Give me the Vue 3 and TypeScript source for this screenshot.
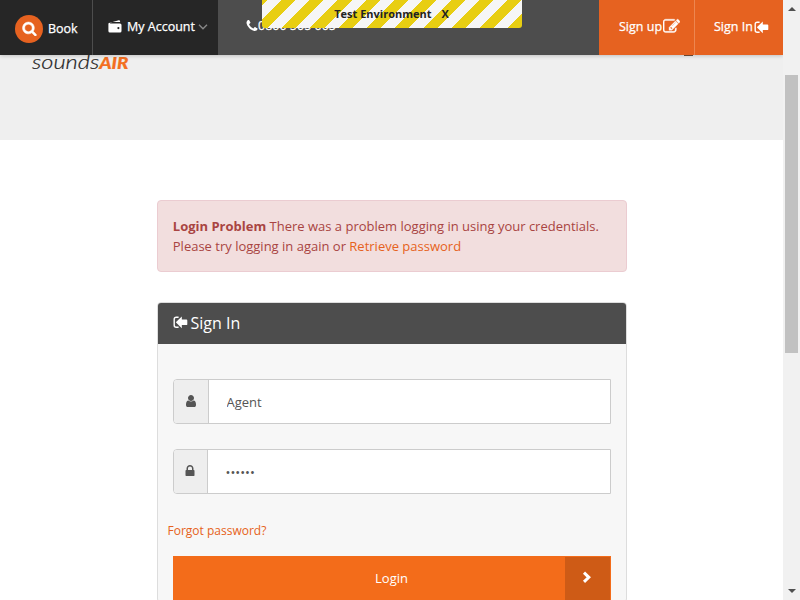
<script setup lang="ts">
import { ref } from 'vue'

const username = ref('Agent')
const password = ref('••••••')
const showEnvironment = ref(true)
</script>

<template>
  <div class="window">
    <main class="page">
      <header class="topbar">
        <a class="book">
          <span class="book-icon">
            <svg viewBox="0 0 1792 1792"><path d="M1216 832q0-185-131.5-316.5t-316.5-131.5-316.5 131.5-131.5 316.5 131.5 316.5 316.5 131.5 316.5-131.5 131.5-316.5zm512 832q0 52-38 90t-90 38q-54 0-90-38l-343-342q-179 124-399 124-143 0-273.5-55.5t-225-150-150-225-55.5-273.5 55.5-273.5 150-225 225-150 273.5-55.5 273.5 55.5 225 150 150 225 55.5 273.5q0 220-124 399l343 343q37 37 37 90z" /></svg>
          </span>
          <span>Book</span>
        </a>
        <a class="account">
          <svg class="wallet" viewBox="0 0 14 13"><path d="M1 3 10.8.2q.9-.2 1.1.6l.3 1.2H3.5L1.8 3.4H12q1.5 0 1.5 1.5V11q0 1.5-1.5 1.5H2Q.4 12.5.4 11V4Q.4 3.2 1 3zm9.4 4a1.1 1.1 0 1 0 0 2.2 1.1 1.1 0 0 0 0-2.2z" /></svg>
          <span>My Account</span>
          <svg class="chevron" viewBox="0 0 10 6"><path d="m1 .8 4 4 4-4" /></svg>
        </a>
        <div class="phone">
          <svg viewBox="0 0 1792 1792"><path d="M1600 1240q0 27-10 70.5t-21 68.5q-21 50-122 106-94 51-186 51-27 0-53-3.5t-57.5-12.5-47-14.5-55.5-20.5-49-18q-98-35-175-83-127-79-264-216t-216-264q-48-77-83-175-3-9-18-49t-20.5-55.5-14.5-47-12.5-57.5-3.5-53q0-92 51-186 56-101 106-122 25-11 68.5-21t70.5-10q14 0 21 3 18 6 53 76 11 19 30 54t35 63.5 31 53.5q3 4 17.5 25t21.5 35.5 7 28.5q0 20-28.5 50t-62 55-62 53-28.5 46q0 9 5 22.5t8.5 20.5 14 24 11.5 19q76 137 174 235t235 174q2 1 19 11.5t24 14 20.5 8.5 22.5 5q18 0 46-28.5t53-62 55-62 50-28.5q14 0 28.5 7t35.5 21.5 25 17.5q25 15 53.5 31t63.5 35 54 30q70 35 76 53 3 7 3 21z" /></svg>
          <span>0800 505 005</span>
        </div>
        <a class="signup">
          <span>Sign up</span>
          <svg viewBox="0 0 1792 1792"><path d="M888 1184l116-116-152-152-116 116v56h96v96h56zm440-720q-16-16-33 1l-350 350q-17 17-1 33t33-1l350-350q17-17 1-33zm80 594v190q0 119-84.5 203.5t-203.5 84.5h-832q-119 0-203.5-84.5t-84.5-203.5v-832q0-119 84.5-203.5t203.5-84.5h832q63 0 117 25 15 7 18 23 3 17-9 29l-49 49q-14 14-32 8-23-6-45-6h-832q-66 0-113 47t-47 113v832q0 66 47 113t113 47h832q66 0 113-47t47-113v-126q0-13 9-22l64-64q15-15 35-7t20 29zm-96-738l288 288-672 672h-288v-288zm444 132l-92 92-288-288 92-92q28-28 68-28t68 28l152 152q28 28 28 68t-28 68z" /></svg>
        </a>
        <a class="signin">
          <span>Sign In</span>
          <svg class="enter" viewBox="0 0 15 13"><path class="bracket" d="M5.6 1.3H3.2Q1.2 1.3 1.2 3.3v5.9q0 2 2 2H5.6" /><path d="m2.8 6.3 6-5.9v3.1h4.6q.9 0 .9.9v3.8q0 .9-.9.9H8.8v3.1z" /></svg>
        </a>
        <div v-if="showEnvironment" class="environment">
          <span>Test Environment</span>
          <span class="close" @click="showEnvironment = false">X</span>
        </div>
      </header>

      <section class="brand">
        <div class="logo">sounds<b>AIR</b></div>
        <span class="menu-tip"></span>
      </section>

      <section class="content">
        <div class="alert">
          <div><strong>Login Problem</strong> There was a problem logging in using your credentials.</div>
          <div>Please try logging in again or <a>Retrieve password</a></div>
        </div>
        <form class="panel" @submit.prevent>
          <h1>
            <svg class="enter" viewBox="0 0 15 13"><path class="bracket" d="M5.6 1.3H3.2Q1.2 1.3 1.2 3.3v5.9q0 2 2 2H5.6" /><path d="m2.8 6.3 6-5.9v3.1h4.6q.9 0 .9.9v3.8q0 .9-.9.9H8.8v3.1z" /></svg>
            <span>Sign In</span>
          </h1>
          <div class="fields">
            <label class="field">
              <span class="addon user">
                <svg viewBox="0 0 1792 1792"><path d="M1536 1399q0 109-62.5 187t-150.5 78h-854q-88 0-150.5-78t-62.5-187q0-85 8.5-160.5t31.5-152 58.5-131 94-89 134.5-34.5q131 128 313 128t313-128q76 0 134.5 34.5t94 89 58.5 131 31.5 152 8.5 160.5zm-256-887q0 159-112.5 271.5t-271.5 112.5-271.5-112.5-112.5-271.5 112.5-271.5 271.5-112.5 271.5 112.5 112.5 271.5z" /></svg>
              </span>
              <input v-model="username" type="text">
            </label>
            <label class="field">
              <span class="addon lock">
                <svg viewBox="0 0 1792 1792"><path d="M640 768h512v-192q0-106-75-181t-181-75-181 75-75 181v192zm832 96v576q0 40-28 68t-68 28h-960q-40 0-68-28t-28-68v-576q0-40 28-68t68-28h32v-192q0-184 132-316t316-132 316 132 132 316v192h32q40 0 68 28t28 68z" /></svg>
              </span>
              <input v-model="password" class="secret" type="text">
            </label>
          </div>
          <a class="forgot">Forgot password?</a>
          <button class="login" type="submit">
            <span class="login-text">Login</span>
            <span class="login-arrow"><svg viewBox="0 0 10 13"><path d="m2 1.7 4.8 4.6L2 10.9" /></svg></span>
          </button>
        </form>
      </section>
    </main>
    <aside class="scrollbar">
      <span class="arrow up"></span>
      <span class="thumb"></span>
      <span class="arrow down"></span>
    </aside>
  </div>
</template>

<style>
body {
  overflow: hidden;
}
</style>

<style scoped>
* {
  box-sizing: border-box;
}
.window {
  display: flex;
  width: 800px;
  height: 600px;
  overflow: hidden;
  background: #fff;
  font: 13px/20px "Open Sans", sans-serif;
}
.page {
  width: 783px;
  height: 600px;
  overflow: hidden;
}
svg {
  display: block;
  flex: none;
  fill: currentColor;
}
.topbar {
  position: relative;
  z-index: 1;
  display: flex;
  height: 55px;
  background: #4d4d4d;
  color: #fff;
  font-size: 12.5px;
  -webkit-text-stroke: 0.25px currentColor;
  box-shadow: 0 1px 4px rgba(0, 0, 0, 0.2);
}
.book {
  display: flex;
  align-items: center;
  gap: 5px;
  width: 93px;
  padding: 3px 0 0 15px;
  background: #262626;
  border-right: 1px solid #4d4d4d;
}
.book-icon {
  display: flex;
  align-items: center;
  justify-content: center;
  width: 28px;
  height: 28px;
  padding: 0 0 1px;
  border-radius: 50%;
  background: #e66220;
}
.book-icon svg {
  width: 15px;
  height: 15px;
  stroke: currentColor;
  stroke-width: 60;
}
.account {
  display: flex;
  align-items: center;
  width: 125px;
  padding: 0 0 1px 15px;
  background: #262626;
}
.wallet {
  width: 14px;
  height: 13px;
  margin: 0 5px 1px 0;
}
.chevron {
  width: 10px;
  height: 6px;
  margin: 0 0 0 3px;
  fill: none;
  stroke: #888;
  stroke-width: 1.4;
}
.phone {
  display: flex;
  align-items: center;
  flex: 1;
  padding: 0 0 3px 27px;
}
.phone svg {
  width: 14px;
  height: 14px;
  margin-right: -1px;
}
.signup,
.signin {
  display: flex;
  align-items: center;
  background: #e66220;
  padding-bottom: 1px;
}
.signup {
  width: 96px;
  padding-left: 20px;
  gap: 1px;
  border-right: 1px solid #ed8650;
}
.signup svg {
  width: 17px;
  height: 17px;
  margin-bottom: 1px;
  stroke: currentColor;
  stroke-width: 40;
}
.signin {
  width: 88px;
  padding-left: 19px;
  gap: 1px;
}
.enter {
  width: 15px;
  height: 13px;
}
.bracket {
  fill: none;
  stroke: currentColor;
  stroke-width: 1.4;
}
.environment {
  position: absolute;
  top: 0;
  left: 262px;
  display: flex;
  justify-content: center;
  gap: 10px;
  width: 260px;
  height: 28px;
  padding: 4px 1px 0 0;
  border-radius: 0 0 3px 3px;
  background: repeating-linear-gradient(-45deg, #e8ce12 0 10px, #f6f6f6 10px 20px);
  color: #222;
  font-size: 11px;
  font-weight: 700;
  -webkit-text-stroke: 0;
}
.brand {
  display: flex;
  justify-content: space-between;
  height: 85px;
  background: #efefef;
}
.logo {
  margin: -6px 0 0 32px;
  color: #222;
  font: italic 300 20px/24px Lato, sans-serif;
  -webkit-text-stroke: 0.2px currentColor;
  transform: scaleX(1.18);
  transform-origin: left;
}
.logo b {
  color: #f36f21;
  font-size: 16px;
  font-weight: 900;
}
.menu-tip {
  width: 9px;
  height: 1px;
  margin-right: 90px;
  background: #76513c;
}
.content {
  display: flex;
  flex-direction: column;
  gap: 30px;
  width: 470px;
  margin: 60px 0 0 157px;
}
.alert {
  height: 72px;
  padding: 15px 10px 15px 14.8px;
  border: 1px solid #ebccd1;
  border-radius: 4px;
  background: #f2dede;
  color: #a94442;
  white-space: nowrap;
}
.alert a,
.forgot {
  color: #e66220;
}
.panel {
  border: 1px solid #ddd;
  border-radius: 4px;
  background: #f7f7f7;
}
.panel h1 {
  display: flex;
  align-items: center;
  gap: 3px;
  height: 41px;
  margin: 0;
  padding: 0 0 2px 14.5px;
  border-radius: 3px 3px 0 0;
  background: #4d4d4d;
  color: #fff;
  font-size: 16px;
  font-weight: 400;
}
.fields {
  display: flex;
  flex-direction: column;
  gap: 25px;
  padding: 35px 15px 0;
}
.field {
  display: flex;
  height: 45px;
  border: 1px solid #ccc;
  border-radius: 4px 0 0 4px;
  background: #fff;
}
.addon {
  display: flex;
  align-items: center;
  justify-content: center;
  padding: 0 1px 1px 0;
  border-right: 1px solid #ccc;
  border-radius: 3px 0 0 3px;
  background: #eee;
  color: #555;
}
.user {
  width: 35px;
}
.lock {
  width: 34px;
}
.addon svg {
  width: 14px;
  height: 14px;
}
.field input {
  flex: 1;
  min-width: 0;
  padding: 0 17.5px;
  border: 0;
  outline: 0;
  background: transparent;
  color: #555;
  font: 13px "Open Sans", sans-serif;
}
.forgot {
  display: block;
  margin: 27px 0 0 9.5px;
  font-size: 12px;
}
.login {
  display: flex;
  width: 438px;
  height: 46px;
  margin: 15px 15px 0;
  padding: 1px 1px 0 0;
  border: 0;
  background: #f36c1a;
  color: #fff;
  font: 13px/20px "Open Sans", sans-serif;
}
.login-text {
  flex: 1;
  padding: 11px 0 0 45px;
}
.login-arrow {
  display: flex;
  justify-content: center;
  width: 45px;
  height: 45px;
  padding: 14px 1px 0 0;
  background: #ce5b16;
}
.login-arrow svg {
  width: 10px;
  height: 13px;
  fill: none;
  stroke: #fff;
  stroke-width: 3;
}
.scrollbar {
  display: flex;
  flex-direction: column;
  align-items: center;
  width: 17px;
  background: #f1f1f1;
}
.arrow {
  border: 4px solid transparent;
}
.up {
  margin-top: 3px;
  border-bottom-color: #505050;
}
.thumb {
  width: 13px;
  height: 278px;
  margin-top: 64px;
  background: #c1c1c1;
}
.down {
  margin: auto 0 3px;
  border-top-color: #505050;
}
</style>
